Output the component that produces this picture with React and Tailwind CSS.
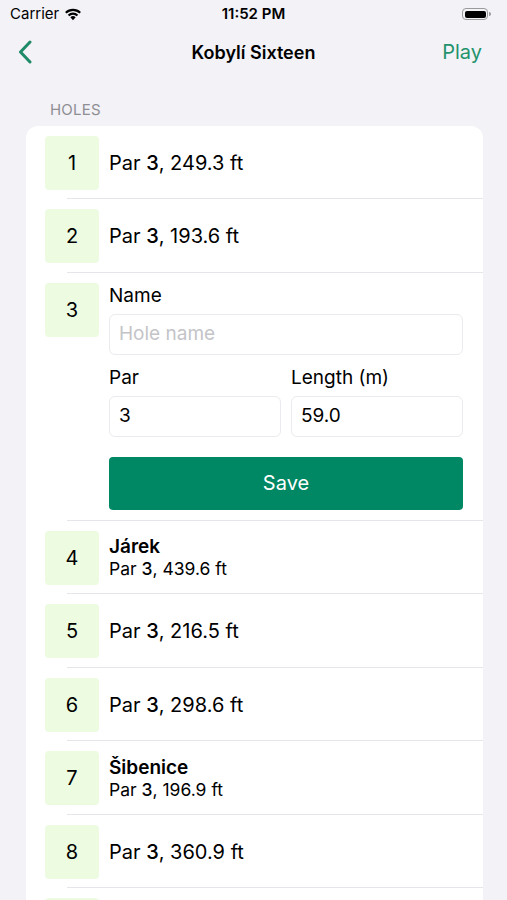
import React from 'react';

const holes = [
  { n: 1, par: 3, len: '249.3 ft' },
  { n: 2, par: 3, len: '193.6 ft' },
  { n: 3, par: 3, len: '193.6 ft', editing: true },
  { n: 4, par: 3, len: '439.6 ft', name: 'Járek' },
  { n: 5, par: 3, len: '216.5 ft' },
  { n: 6, par: 3, len: '298.6 ft' },
  { n: 7, par: 3, len: '196.9 ft', name: 'Šibenice' },
  { n: 8, par: 3, len: '360.9 ft' },
  { n: 9, hidden: true },
];

function StatusBar() {
  return (
    <div className="relative h-[28px] flex items-center px-[10px] text-black">
      <div className="flex items-center gap-[5px] text-[15px]">
        <span>Carrier</span>
        <svg width="18" height="14" viewBox="0 0 17 13">
          <path d="M8.5 12.5 L6 9.6 A3.6 3.6 0 0 1 11 9.6 Z" fill="black" />
          <path d="M3.6 7.2 A7 7 0 0 1 13.4 7.2 L12 8.7 A5 5 0 0 0 5 8.7 Z" fill="black" />
          <path d="M1 4.6 A10.8 10.8 0 0 1 16 4.6 L14.6 6.1 A8.8 8.8 0 0 0 2.4 6.1 Z" fill="black" />
        </svg>
      </div>
      <div className="absolute left-0 right-0 text-center text-[15px] font-semibold pointer-events-none">11:52 PM</div>
      <div className="ml-auto flex items-center mr-[6px]">
        <div className="w-[26px] h-[12px] rounded-[4px] border border-[#9a9a9a] p-[1.5px]">
          <div className="w-full h-full rounded-[2px] bg-black" />
        </div>
        <div className="w-[2px] h-[4px] rounded-r bg-[#9a9a9a] ml-[1px]" />
      </div>
    </div>
  );
}

function NavBar() {
  return (
    <div className="relative h-[48px] flex items-center px-[16px]">
      <svg width="16" height="24" viewBox="0 0 16 24" className="ml-[1px]">
        <path d="M13 2 L3.5 12 L13 22" fill="none" stroke="#1f8a67" strokeWidth="3" strokeLinecap="round" strokeLinejoin="round" />
      </svg>
      <div className="absolute left-0 right-0 text-center text-[18px] font-semibold text-black pointer-events-none">Kobylí Sixteen</div>
      <span className="ml-auto mr-[9px] text-[20px] text-[#23936c]">Play</span>
    </div>
  );
}

function Badge({ n }) {
  return (
    <div className="w-[54px] h-[54px] shrink-0 rounded-[4px] bg-[#edfbe1] flex items-center justify-center text-[20px] text-black">
      {n}
    </div>
  );
}

function ParText({ par, len }) {
  return (
    <>
      Par <span className="font-medium">{par}</span>, {len}
    </>
  );
}

function EditRow({ hole }) {
  return (
    <div className="flex gap-[10px] pt-[10px] pb-[10px]">
      <Badge n={hole.n} />
      <div className="flex-1 mr-[20px]">
        <div className="text-[19px] leading-[24px] mt-[1px]">Name</div>
        <div className="mt-[6px] h-[41px] rounded-[6px] border border-[#ebebef] px-[9px] flex items-center text-[19px] text-[#c4c4c8]">
          Hole name
        </div>
        <div className="flex gap-[10px] mt-[11px]">
          <div className="flex-1">
            <div className="text-[19px] leading-[24px]">Par</div>
            <div className="mt-[6px] h-[41px] rounded-[6px] border border-[#ebebef] px-[9px] flex items-center text-[19px]">3</div>
          </div>
          <div className="flex-1">
            <div className="text-[19px] leading-[24px]">Length (m)</div>
            <div className="mt-[6px] h-[41px] rounded-[6px] border border-[#ebebef] px-[9px] flex items-center text-[19px]">59.0</div>
          </div>
        </div>
        <button className="mt-[20px] w-full h-[53px] rounded-[4px] bg-[#008763] text-white text-[20px]">Save</button>
      </div>
    </div>
  );
}

function HoleRow({ hole }) {
  if (hole.editing) return <EditRow hole={hole} />;
  if (hole.hidden) {
    return (
      <div className="flex items-center gap-[10px] pt-[10px] pb-[8.5px]">
        <div className="w-[54px] h-[54px] shrink-0 rounded-[4px] bg-[#edfbe1]" />
      </div>
    );
  }
  return (
    <div className="flex items-center gap-[10px] pt-[10px] pb-[8.5px]">
      <Badge n={hole.n} />
      {hole.name ? (
        <div className="flex flex-col">
          <span className="text-[19px] leading-[23px] font-semibold">{hole.name}</span>
          <span className="text-[17.5px] leading-[22px]"><ParText par={hole.par} len={hole.len} /></span>
        </div>
      ) : (
        <span className="text-[20px]"><ParText par={hole.par} len={hole.len} /></span>
      )}
    </div>
  );
}

export default function App() {
  return (
    <div className="w-[507px] h-[900px] overflow-hidden bg-[#f2f2f7] text-black" style={{ fontFamily: 'Inter, "Noto Sans", sans-serif' }}>
      <StatusBar />
      <NavBar />
      <div className="px-[24px]">
        <div className="ml-[26px] mt-[23px] text-[15px] text-[#8e8e93] tracking-[0.2px]">HOLES</div>
        <div className="mt-[4px] bg-white rounded-[12px] pl-[19px] mx-[2px] w-[457px]">
          {holes.map((h) => (
            <div key={h.n}>
              <HoleRow hole={h} />
              <div className="ml-[22px] h-px bg-[#e6e6ea]" />
            </div>
          ))}
        </div>
      </div>
    </div>
  );
}
